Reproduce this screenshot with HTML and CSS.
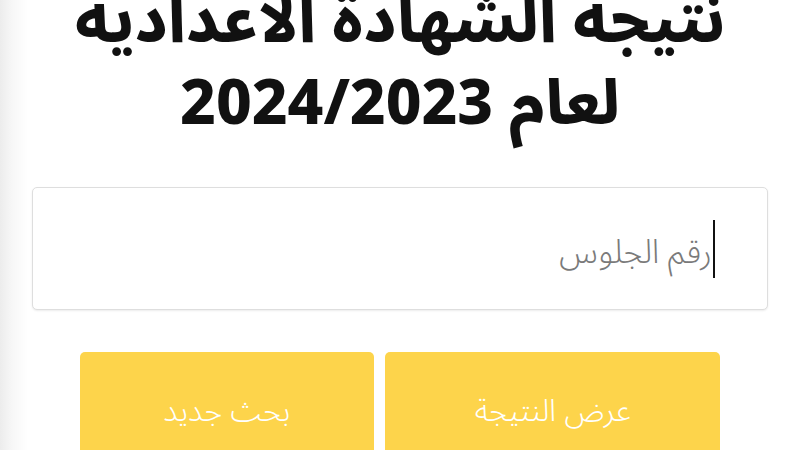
FILE: index.html
```html
<!DOCTYPE html>
<html lang="ar" dir="rtl">
<head>
    <meta charset="utf-8">
    <title>نتيجة الشهادة الاعدادية</title>
    <link rel="stylesheet" href="styles.css">
</head>
<body>
    <main class="page">
        <h1 class="title">نتيجة الشهادة الاعدادية<br>لعام 2024/2023</h1>

        <div class="field">
            <span class="caret"></span>
            <span class="hint">رقم الجلوس</span>
        </div>

        <div class="actions">
            <button class="btn btn-main">عرض النتيجة</button>
            <button class="btn btn-new">بحث جديد</button>
        </div>
    </main>
</body>
</html>
```

FILE: styles.css
```css
html, body {
    margin: 0;
    height: 100%;
    overflow: hidden;
}

body {
    background: linear-gradient(to right, #ececec 0px, #f7f7f7 12px, #ffffff 28px);
    font-family: "Noto Sans Arabic", "DejaVu Sans", sans-serif;
}

.page {
    width: 800px;
    height: 450px;
}

.title {
    margin: -18px 0 0 0;
    text-align: center;
    font-size: 62px;
    line-height: 82px;
    font-weight: 800;
    color: #111;
}

.field {
    margin: 41px 32px 0 32px;
    height: 121px;
    border: 1px solid #dedede;
    border-radius: 5px;
    background: #fff;
    box-shadow: 0 1px 2px rgba(0, 0, 0, 0.08);
    display: flex;
    align-items: center;
    padding-right: 52px;
}

.caret {
    width: 2px;
    height: 58px;
    background: #111;
}

.hint {
    font-size: 33px;
    font-weight: 300;
    color: #7a7a7a;
    padding: 8px 1px 0 0;
}

.actions {
    margin: 42px 80px 0 80px;
    display: grid;
    grid-template-columns: 335px 294px;
    column-gap: 11px;
}

.btn {
    height: 118px;
    border: none;
    border-radius: 5px;
    background: #fdd44b;
    color: #fff;
    font-family: "Noto Sans Arabic", "DejaVu Sans", sans-serif;
    font-size: 31px;
    font-weight: 300;
    padding: 0;
}
```
